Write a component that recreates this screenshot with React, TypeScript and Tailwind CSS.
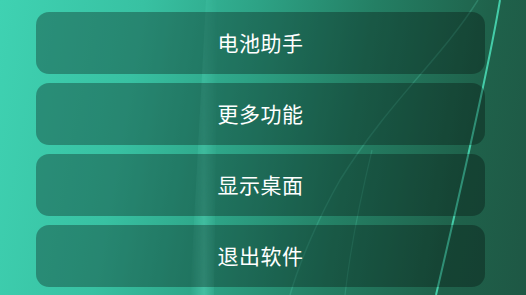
import React from "react";

const items = ["电池助手", "更多功能", "显示桌面", "退出软件"];

export default function App() {
  return (
    <div
      className="relative w-[526px] h-[295px] overflow-hidden bg-[linear-gradient(100deg,#3fd2b2_0%,#38c1a2_25%,#2da285_45%,#247f64_65%,#1f624b_85%,#1e5744_100%)]"
      style={{ fontFamily: '"Noto Sans CJK SC", "Noto Sans", sans-serif' }}
    >
      <svg className="absolute inset-0 pointer-events-none" width="526" height="295" viewBox="0 0 526 295">
        <defs>
          <linearGradient id="band" x1="0" y1="0" x2="1" y2="0">
            <stop offset="0" stopColor="#6ff5d8" stopOpacity="0" />
            <stop offset="0.5" stopColor="#6ff5d8" stopOpacity="0.35" />
            <stop offset="1" stopColor="#6ff5d8" stopOpacity="0" />
          </linearGradient>
          <linearGradient id="fade" x1="0" y1="0" x2="0" y2="1">
            <stop offset="0" stopColor="#fff" stopOpacity="0.3" />
            <stop offset="1" stopColor="#fff" stopOpacity="1" />
          </linearGradient>
          <mask id="m">
            <rect width="526" height="295" fill="url(#fade)" />
          </mask>
        </defs>
        <path d="M206 0 L218 0 L214 295 L190 295 Z" fill="url(#band)" mask="url(#m)" />
        <path d="M478 0 C440 60 390 100 340 180 C320 215 300 260 290 295" stroke="#5fe0c0" strokeOpacity="0.22" strokeWidth="1.5" fill="none" />
        <path d="M500 0 C490 60 470 150 436 295" stroke="#48d8b2" strokeOpacity="0.9" strokeWidth="2" fill="none" />
        <path d="M372 150 C360 200 350 250 345 295" stroke="#5fe0c0" strokeOpacity="0.2" strokeWidth="1.2" fill="none" />
      </svg>
      <div className="relative flex flex-col gap-[9px] pt-[12px] pl-[36px] pr-[41px]">
        {items.map((t) => (
          <div
            key={t}
            className="h-[62px] rounded-[13px] bg-black/30 flex items-center justify-center text-white text-[21px] tracking-[0.5px]"
          >
            {t}
          </div>
        ))}
      </div>
    </div>
  );
}
